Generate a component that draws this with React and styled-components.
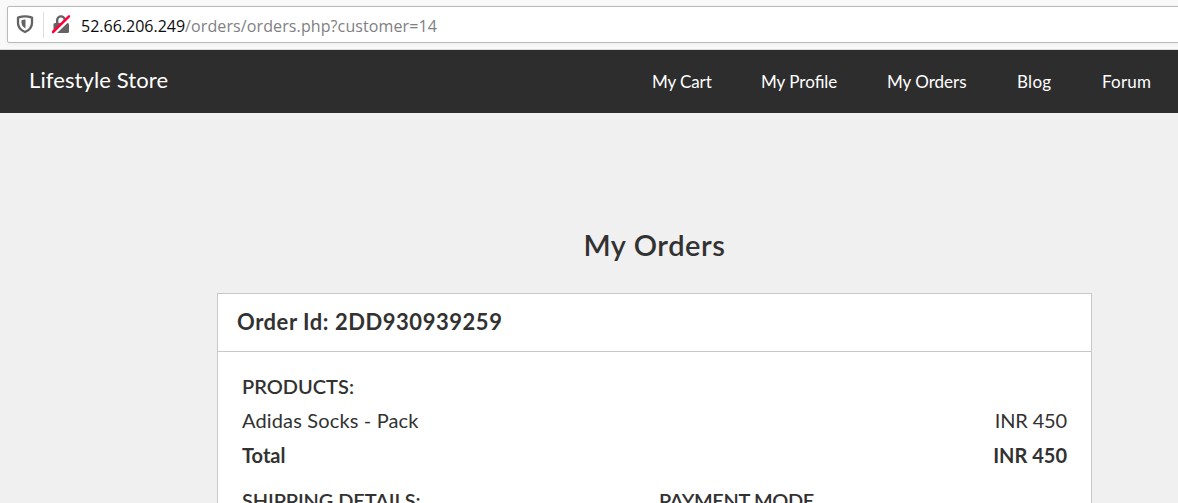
import React from "react";
import styled, { createGlobalStyle } from "styled-components";

const GlobalStyle = createGlobalStyle`
  * { box-sizing: border-box; }
  html, body { margin: 0; height: 503px; overflow: hidden; background: #f0f0f0; }
  body { font-family: "Lato", "Liberation Sans", sans-serif; color: #323232; }
`;

const Window = styled.div`
  height: 503px;
  overflow: hidden;
`;

const Toolbar = styled.div`
  height: 50px;
  padding: 6px 0 0 7px;
  background: #f9f9fa;
  border-bottom: 1px solid #dcdcdd;
  overflow: hidden;
`;

const AddressBar = styled.div`
  display: flex;
  align-items: center;
  width: 1180px;
  height: 37px;
  padding-left: 8px;
  background: #fff;
  border: 1px solid #b9b9ba;
  border-radius: 2px;
  box-shadow: 0 1px 4px rgba(0, 0, 0, 0.05);

  svg {
    margin-bottom: 1px;
  }
`;

const Separator = styled.span`
  width: 1px;
  height: 26px;
  margin: 0 8px 0 9px;
  background: #dededf;
`;

const Url = styled.span`
  margin-left: 11px;
  padding-top: 3px;
  font: 16px/22px "Open Sans", "Noto Sans", sans-serif;
  letter-spacing: 0.11px;
  color: #808083;
  white-space: nowrap;
`;

const Host = styled.span`
  color: #0c0c0d;
  letter-spacing: 0;
`;

const Navbar = styled.nav`
  display: flex;
  align-items: center;
  justify-content: space-between;
  height: 63px;
  padding: 0 26px 0 29px;
  background: #2d2d2d;
  color: #fff;
`;

const Brand = styled.a`
  margin-bottom: 3px;
  font-size: 22px;
  line-height: 30px;
  letter-spacing: 0.1px;
`;

const Links = styled.div`
  display: flex;
  gap: 50px;
`;

const NavLink = styled.a`
  width: ${(p) => p.$width}px;
  font-size: 17px;
  line-height: 24px;
  white-space: nowrap;
  letter-spacing: ${(p) => p.$tracking || 0}px;
`;

const Main = styled.main`
  width: 875px;
  margin-left: 217px;
  padding-top: 112px;
`;

const Title = styled.h1`
  margin: 0 0 28px;
  font-size: 29px;
  font-weight: 600;
  line-height: 40px;
  text-align: center;
  letter-spacing: 0.6px;
`;

const Card = styled.section`
  height: 400px;
  background: #fff;
  border: 1px solid #c8c8c8;
`;

const CardHeader = styled.header`
  height: 58px;
  padding: 12px 19px;
  border-bottom: 1px solid #c8c8c8;
  font-size: 22px;
  font-weight: 700;
  line-height: 32px;
  letter-spacing: 0.54px;
`;

const CardBody = styled.div`
  padding: 17px 24px 0;
  font-size: 20px;
  line-height: 34px;
`;

const Row = styled.div`
  display: flex;
  justify-content: space-between;
  height: 34px;
  padding-top: ${(p) => (p.$strong ? 1 : 0)}px;
  font-weight: ${(p) => (p.$strong ? 700 : 400)};
`;

const Product = styled.span`
  letter-spacing: 0.15px;
`;

const Price = styled.span`
  letter-spacing: ${(p) => p.$tracking || 0}px;
`;

const Label = styled.span`
  font-weight: 600;
  letter-spacing: ${(p) => p.$tracking || 0}px;
`;

const Columns = styled.div`
  display: grid;
  grid-template-columns: 417px 1fr;
  margin-top: 12px;
`;

const links = [
  { text: "My Cart", width: 59, tracking: -0.1 },
  { text: "My Profile", width: 76 },
  { text: "My Orders", width: 80 },
  { text: "Blog", width: 35, tracking: 0.3 },
  { text: "Forum", width: 50, tracking: 0.2 },
];

const ShieldIcon = () => (
  <svg width="18" height="20" viewBox="0 0 18 20" fill="none">
    <path d="M9 2.300C11.500 2.300 13.800 2.800 16 3.600V9c0 4.200-2.500 7-7 9-4.500-2-7-4.800-7-9V3.600C4.200 2.800 6.500 2.300 9 2.300Z" stroke="#636363" strokeWidth="2.300" strokeLinejoin="round" />
    <path d="M9.500 5.500v9C6.800 13 5.500 11 5.500 8.500V6.300Q7.500 5.500 9.500 5.500Z" fill="#636363" />
  </svg>
);

const InsecureIcon = () => (
  <svg width="18" height="20" viewBox="0 0 18 20" fill="none">
    <path d="M5.200 10V6.200a3.800 3.800 0 0 1 7.600 0V10" stroke="#636363" strokeWidth="2.400" />
    <rect x="1.500" y="9" width="15.500" height="10" rx="1.500" fill="#636363" />
    <path d="M1 20.500 18.500 3.500" stroke="#fff" strokeWidth="3.500" />
    <path d="M1 18 17 2.300" stroke="#ff0039" strokeWidth="2.500" strokeLinecap="round" />
  </svg>
);

export default function App() {
  return (
    <Window>
      <GlobalStyle />
      <Toolbar>
        <AddressBar>
          <ShieldIcon />
          <Separator />
          <InsecureIcon />
          <Url><Host>52.66.206.249</Host>/orders/orders.php?customer=14</Url>
        </AddressBar>
      </Toolbar>
      <Navbar>
        <Brand>Lifestyle Store</Brand>
        <Links>
          {links.map((l) => (
            <NavLink key={l.text} $width={l.width} $tracking={l.tracking}>{l.text}</NavLink>
          ))}
        </Links>
      </Navbar>
      <Main>
        <Title>My Orders</Title>
        <Card>
          <CardHeader>Order Id: 2DD930939259</CardHeader>
          <CardBody>
            <Row><Label>PRODUCTS:</Label></Row>
            <Row><Product>Adidas Socks - Pack</Product><Price $tracking={-0.15}>INR 450</Price></Row>
            <Row $strong><span>Total</span><Price>INR 450</Price></Row>
            <Columns>
              <Label $tracking={-0.1}>SHIPPING DETAILS:</Label>
              <Label $tracking={-0.4}>PAYMENT MODE</Label>
            </Columns>
          </CardBody>
        </Card>
      </Main>
    </Window>
  );
}
